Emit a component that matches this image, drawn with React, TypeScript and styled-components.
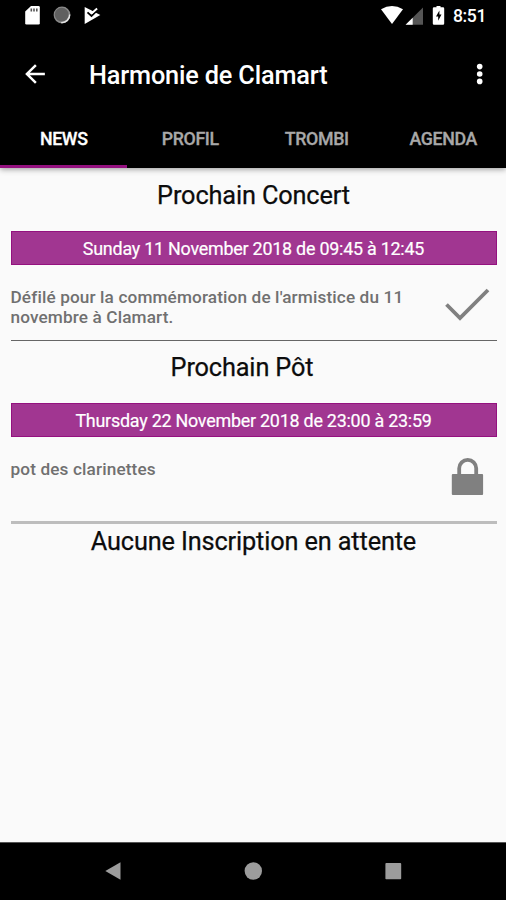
import React from "react";
import styled, { createGlobalStyle } from "styled-components";

const GlobalStyle = createGlobalStyle`
  * { box-sizing: border-box; }
  body { margin: 0; background: #000; font-family: Roboto, "Liberation Sans", sans-serif; }
  svg { display: block; flex: none; overflow: visible; }
`;

const Screen = styled.div`
  width: 506px;
  height: 900px;
  display: flex;
  flex-direction: column;
  background: #fafafa;
  overflow: hidden;
`;

const StatusBar = styled.div`
  height: 32px;
  flex: none;
  display: flex;
  align-items: center;
  justify-content: space-between;
  background: #000;
  color: #fff;
`;

const Clock = styled.span`
  width: 34px;
  margin-left: 8px;
  margin-right: 19px;
  font-size: 17.6px;
  font-weight: 500;
  line-height: 32px;
  letter-spacing: -0.4px;
  white-space: nowrap;
`;

const StatusGroup = styled.div`
  display: flex;
  align-items: center;
`;

const Toolbar = styled.header`
  height: 79px;
  flex: none;
  display: flex;
  align-items: center;
  padding: 5px 18px 0 18px;
  background: #000;
  color: #fff;
`;

const IconButton = styled.button`
  display: flex;
  padding: 0;
  border: 0;
  background: none;
  color: inherit;
`;

const Title = styled.h1`
  flex: 1;
  margin: 3px 0 0 37px;
  font-size: 25.3px;
  font-weight: 500;
  line-height: 32px;
  letter-spacing: -0.17px;
  white-space: nowrap;
`;

const Tabs = styled.nav`
  height: 56.5px;
  flex: none;
  display: grid;
  grid-template-columns: repeat(4, 1fr);
  background: #000;
  box-shadow: 0 1px 6px rgba(0, 0, 0, 0.42);
`;

const Tab = styled.button<{ $active?: boolean }>`
  padding: 1px 0 0 1px;
  border: 0;
  border-bottom: 3px solid ${(p) => (p.$active ? "#94117f" : "transparent")};
  background: none;
  color: ${(p) => (p.$active ? "#fff" : "#a8a8a8")};
  font-family: inherit;
  font-size: 17.8px;
  font-weight: 500;
  letter-spacing: -0.35px;
  -webkit-text-stroke: 0.3px currentColor;
`;

const Content = styled.main`
  flex: 1;
  padding: 0 9.5px 0 10.5px;
`;

const Heading = styled.h2<{ $inset?: number }>`
  margin: 0;
  height: 33px;
  padding-right: ${(p) => p.$inset ?? 0}px;
  font-size: 25.3px;
  font-weight: 400;
  line-height: 33px;
  letter-spacing: -0.14px;
  text-align: center;
  color: #0c0c0c;
  -webkit-text-stroke: 0.25px #0c0c0c;
  white-space: nowrap;
`;

const Footnote = styled(Heading)`
  padding-top: 1px;
`;

const Event = styled.section<{ $height: number; $rule: string; $top: number }>`
  height: ${(p) => p.$height}px;
  padding-top: ${(p) => p.$top}px;
  border-bottom: ${(p) => p.$rule};
`;

const DateBanner = styled.div`
  height: 34px;
  margin-top: 19px;
  border: 1px solid #94117f;
  background: #a13691;
  color: #fff;
  font-size: 17.9px;
  line-height: 34px;
  letter-spacing: -0.23px;
  -webkit-text-stroke: 0.2px #fff;
  text-align: center;
  white-space: nowrap;
`;

const Details = styled.div`
  display: flex;
  justify-content: space-between;
  align-items: flex-start;
  padding-top: 22px;
`;

const Description = styled.p`
  width: 410px;
  margin: 0;
  font-size: 17.2px;
  font-weight: 500;
  line-height: 20.3px;
  letter-spacing: 0.13px;
  color: #707070;
`;

const NavBar = styled.footer`
  height: 58.5px;
  flex: none;
  display: flex;
  justify-content: center;
  align-items: center;
  gap: 120px;
  background: #000;
  border-top: 1px solid #555;
`;

const SystemIcons = () => (
  <svg width="110" height="32" viewBox="0 0 110 32">
    <path d="M31 6h7.5q1.3 0 1.3 1.3v15.9q0 1.3-1.3 1.3H26.5q-1.3 0-1.3-1.3V11.5z" fill="#fff" />
    <path d="M31.3 8.4v3M34 8.4v3M36.8 8.4v3" stroke="#555" strokeWidth="1.6" />
    <circle cx="62" cy="15" r="8.4" fill="#888" />
    <path d="M69.6 14.5a7.7 7.7 0 0 1-8.4 8" fill="none" stroke="#e4e4e4" strokeWidth="1.6" />
    <circle cx="61.7" cy="14.7" r="6.9" fill="#606060" />
    <path d="M84.7 7v17L100.3 15z" fill="#fff" />
    <path d="M87.5 12.3l4 3.7 7.5-7.3" fill="none" stroke="#000" strokeWidth="1.8" />
    <path d="M89.5 10.5l2.6 2.5 5-4.4" fill="none" stroke="#fff" strokeWidth="2" />
  </svg>
);

const RadioIcons = () => (
  <svg width="64" height="32" viewBox="0 0 64 32">
    <path d="M0 9.3Q11 2.5 22 9.3L11 24z" fill="#fff" />
    <path d="M42 7.5V24.7H24.6z" fill="#555" />
    <path d="M31.7 17.7v7h-7.1z" fill="#fff" />
    <path d="M53 7.3h2.5V6h4v1.3H62q1.2 0 1.2 1.2v15q0 1.2-1.2 1.2h-9q-1.2 0-1.2-1.2v-15q0-1.2 1.2-1.2z" fill="#fff" />
    <path d="M58.4 10.5l-3.4 6h2.2v4.2l3.3-6.2h-2.1z" fill="#000" />
  </svg>
);

const BackIcon = () => (
  <svg width="34" height="34" viewBox="0 0 24 24" fill="currentColor">
    <path d="M20 11H7.83l5.59-5.59L12 4l-8 8 8 8 1.41-1.41L7.83 13H20z" transform="translate(12 12) scale(.87) translate(-12 -12)" />
  </svg>
);

const MoreIcon = () => (
  <svg width="18" height="34" viewBox="0 0 18 34" fill="currentColor">
    <circle cx="9.7" cy="9.6" r="2.8" />
    <circle cx="9.7" cy="17" r="2.8" />
    <circle cx="9.7" cy="24.4" r="2.8" />
  </svg>
);

const CheckIcon = () => (
  <svg width="58" height="40" viewBox="0 0 58 40">
    <path d="M7.5 17.5L21 31L49 3" fill="none" stroke="#808080" strokeWidth="3.8" />
  </svg>
);

const LockIcon = () => (
  <svg width="58" height="44" viewBox="0 0 58 44">
    <path d="M20.2 18V9.3a8.5 8.5 0 0 1 17 0V18" fill="none" stroke="#808080" strokeWidth="3.8" />
    <rect x="12.8" y="15" width="31.3" height="21" rx="1" fill="#808080" />
  </svg>
);

const NavIcon = ({ kind }: { kind: "back" | "home" | "recent" }) => (
  <svg width="20" height="20" viewBox="0 0 20 20" fill="#9c9c9c">
    {kind === "back" && <path d="M2.3 10L17.5 1.3v17.4z" />}
    {kind === "home" && <circle cx="10.3" cy="10" r="8.7" />}
    {kind === "recent" && <rect x="2.4" y="2.1" width="15.8" height="16.2" rx="0.8" />}
  </svg>
);

export default function App() {
  return (
    <Screen>
      <GlobalStyle />
      <StatusBar>
        <SystemIcons />
        <StatusGroup>
          <RadioIcons />
          <Clock>8:51</Clock>
        </StatusGroup>
      </StatusBar>
      <Toolbar>
        <IconButton aria-label="Back"><BackIcon /></IconButton>
        <Title>Harmonie de Clamart</Title>
        <IconButton aria-label="More options"><MoreIcon /></IconButton>
      </Toolbar>
      <Tabs>
        <Tab $active>NEWS</Tab>
        <Tab>PROFIL</Tab>
        <Tab>TROMBI</Tab>
        <Tab>AGENDA</Tab>
      </Tabs>
      <Content>
        <Event $height={173.5} $top={11.5} $rule="1.5px solid #666">
          <Heading>Prochain Concert</Heading>
          <DateBanner>Sunday 11 November 2018 de 09:45 à 12:45</DateBanner>
          <Details>
            <Description>Défilé pour la commémoration de l'armistice du 11 novembre à Clamart.</Description>
            <CheckIcon />
          </Details>
        </Event>
        <Event $height={182.5} $top={10} $rule="3px solid #bdbdbd">
          <Heading $inset={23}>Prochain Pôt</Heading>
          <DateBanner>Thursday 22 November 2018 de 23:00 à 23:59</DateBanner>
          <Details>
            <Description>pot des clarinettes</Description>
            <LockIcon />
          </Details>
        </Event>
        <Footnote>Aucune Inscription en attente</Footnote>
      </Content>
      <NavBar>
        <NavIcon kind="back" />
        <NavIcon kind="home" />
        <NavIcon kind="recent" />
      </NavBar>
    </Screen>
  );
}
